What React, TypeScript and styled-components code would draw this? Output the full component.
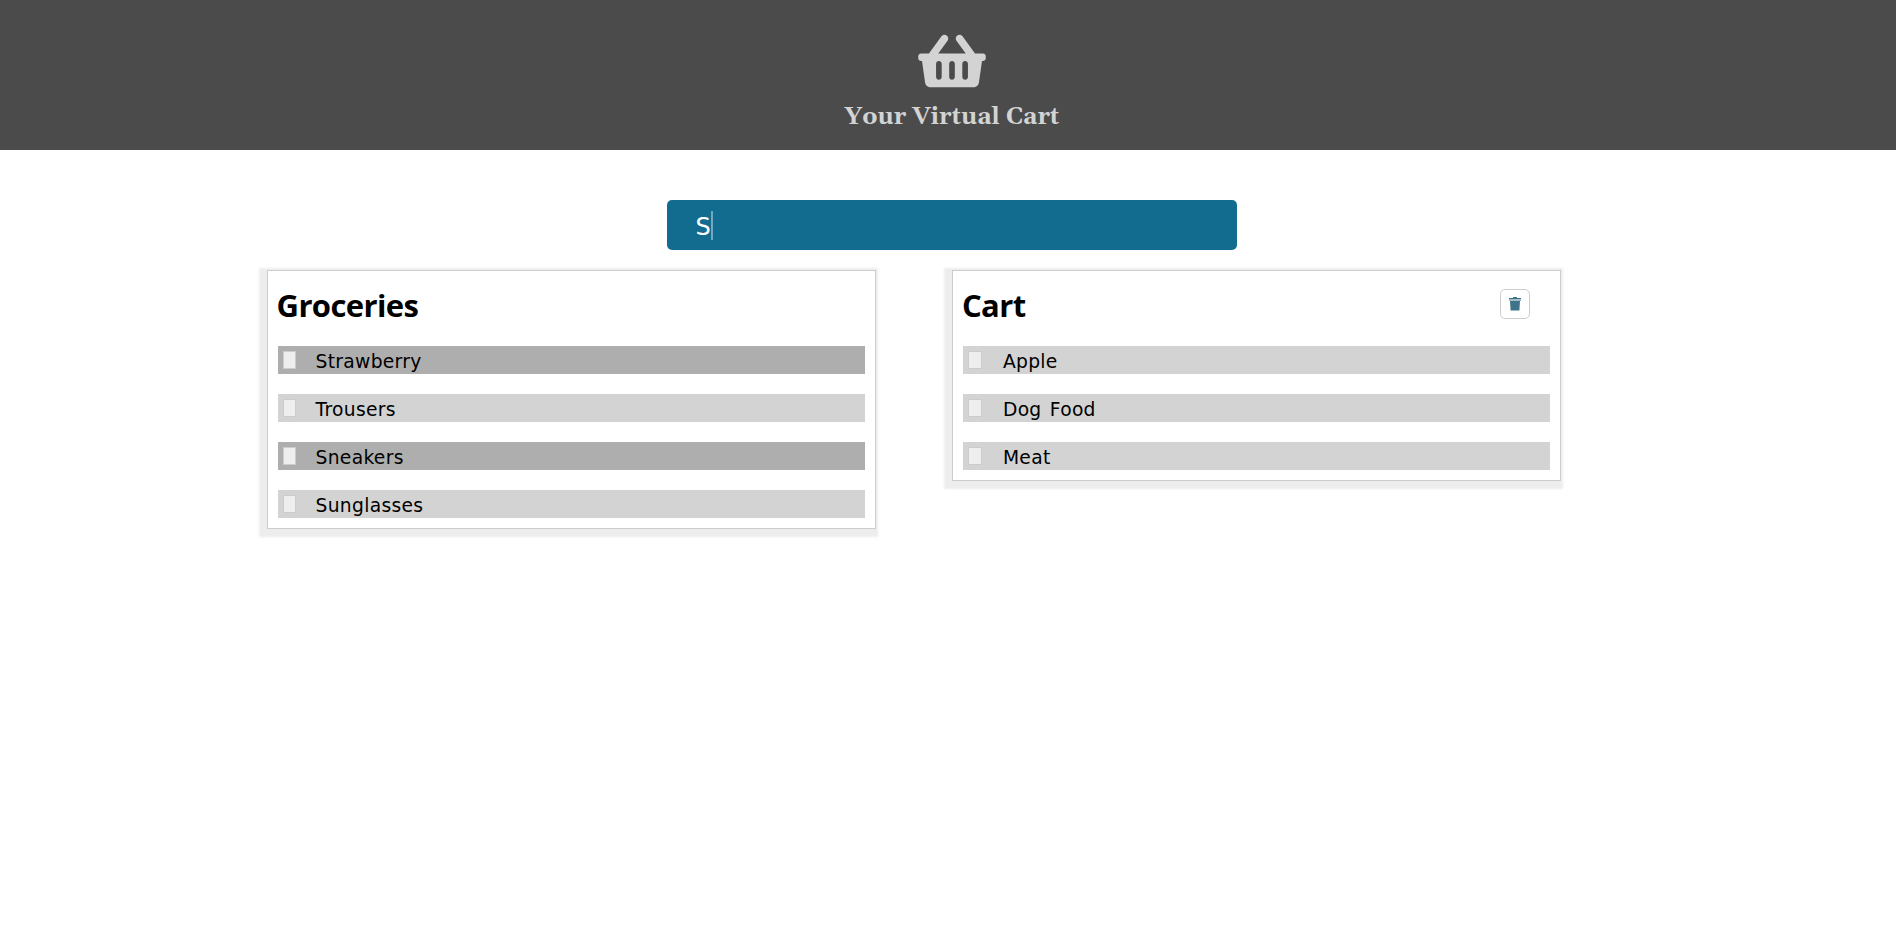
import React from "react";
import styled, { createGlobalStyle } from "styled-components";
import { FaShoppingBasket } from "react-icons/fa";

const GlobalStyle = createGlobalStyle`
  * { box-sizing: border-box; }
  html, body { margin: 0; padding: 0; background: #fff; overflow: hidden; }
`;

const Page = styled.div`
  width: 1904px;
  min-height: 946px;
`;

const Header = styled.header`
  height: 150px;
  padding-top: 31px;
  display: flex;
  flex-direction: column;
  align-items: center;
  background: #4b4b4b;
  color: #d3d3d3;
`;

const Basket = styled(FaShoppingBasket)`
  width: 68px;
  height: 60px;
`;

const Brand = styled.h1`
  margin: 9px 0 0;
  font: bold 24px/34px Gelasio, Georgia, "Liberation Serif", serif;
  white-space: nowrap;
`;

const SearchBar = styled.div`
  width: 570px;
  height: 50px;
  margin: 50px 0 20px 666.6px;
  padding: 0 0 0 29px;
  display: flex;
  align-items: center;
  border-radius: 5px;
  background: #116c90;
  color: #fff;
  font: 24px/30px "DejaVu Sans", Verdana, sans-serif;
`;

const Caret = styled.span`
  width: 2px;
  height: 29px;
  background: #72a9be;
`;

const Typed = styled.span`
  width: 15px;
  padding-top: 3px;
`;

const Columns = styled.main`
  display: flex;
  align-items: flex-start;
  gap: 76.1px;
  padding-left: 14%;
`;

const Panel = styled.section`
  width: 609.3px;
  padding: 10px;
  border: 1px solid #ccc;
  background: #fff;
  box-shadow: -3px 3px 2px 5px #ededed;
`;

const PanelHead = styled.div`
  height: 65px;
  display: flex;
  justify-content: space-between;
`;

const Title = styled.h2`
  margin: 2px 0 0 -1px;
  font: bold 31px/44px "Open Sans", "Noto Sans", sans-serif;
  letter-spacing: -0.6px;
  color: #000;
`;

const TrashButton = styled.button`
  width: 30px;
  height: 30px;
  margin: 8px 20px 0 0;
  padding: 0 1px 0 0;
  display: grid;
  place-items: center;
  border: 1px solid #ccc;
  border-radius: 5px;
  background: #fff;
`;

const List = styled.ul`
  margin: 0;
  padding: 0;
  list-style: none;
  display: grid;
  gap: 20px;
`;

const Row = styled.li<{ $dark?: boolean; $gap: number }>`
  height: 28px;
  padding-left: 5px;
  display: flex;
  align-items: center;
  gap: ${(p) => p.$gap}px;
  background: ${(p) => (p.$dark ? "#aeaeae" : "#d3d3d3")};
  color: #000;
`;

const Label = styled.span`
  padding-top: 4px;
  font: 18.7px/28px "DejaVu Sans", Verdana, sans-serif;
  letter-spacing: 0.3px;
  word-spacing: 2px;
`;

const Check = styled.span<{ $width: number }>`
  width: ${(p) => p.$width}px;
  height: 18px;
  border: 1px solid #ccc;
  background: #eee;
`;

const groceries = ["Strawberry", "Trousers", "Sneakers", "Sunglasses"];
const cart = ["Apple", "Dog Food", "Meat"];

export default function App() {
  return (
    <Page>
      <GlobalStyle />
      <Header>
        <Basket />
        <Brand>Your Virtual Cart</Brand>
      </Header>
      <SearchBar>
        <Typed>S</Typed>
        <Caret />
      </SearchBar>
      <Columns>
        <Panel>
          <PanelHead>
            <Title>Groceries</Title>
          </PanelHead>
          <List>
            {groceries.map((name, i) => (
              <Row key={name} $dark={i % 2 === 0} $gap={20}>
                <Check $width={13} />
                <Label>{name}</Label>
              </Row>
            ))}
          </List>
        </Panel>
        <Panel>
          <PanelHead>
            <Title>Cart</Title>
            <TrashButton aria-label="Empty cart">
              <svg width="12" height="14" viewBox="0 0 12 14">
                <path fill="#3f7389" d="M4 0h4v1H4zM0 1h12v1H0zM1 4h10l-.6 9.5H1.6z" />
                <path fill="#a3bcc7" d="M0 2h12v2H0z" />
              </svg>
            </TrashButton>
          </PanelHead>
          <List>
            {cart.map((name) => (
              <Row key={name} $gap={21}>
                <Check $width={14} />
                <Label>{name}</Label>
              </Row>
            ))}
          </List>
        </Panel>
      </Columns>
    </Page>
  );
}
